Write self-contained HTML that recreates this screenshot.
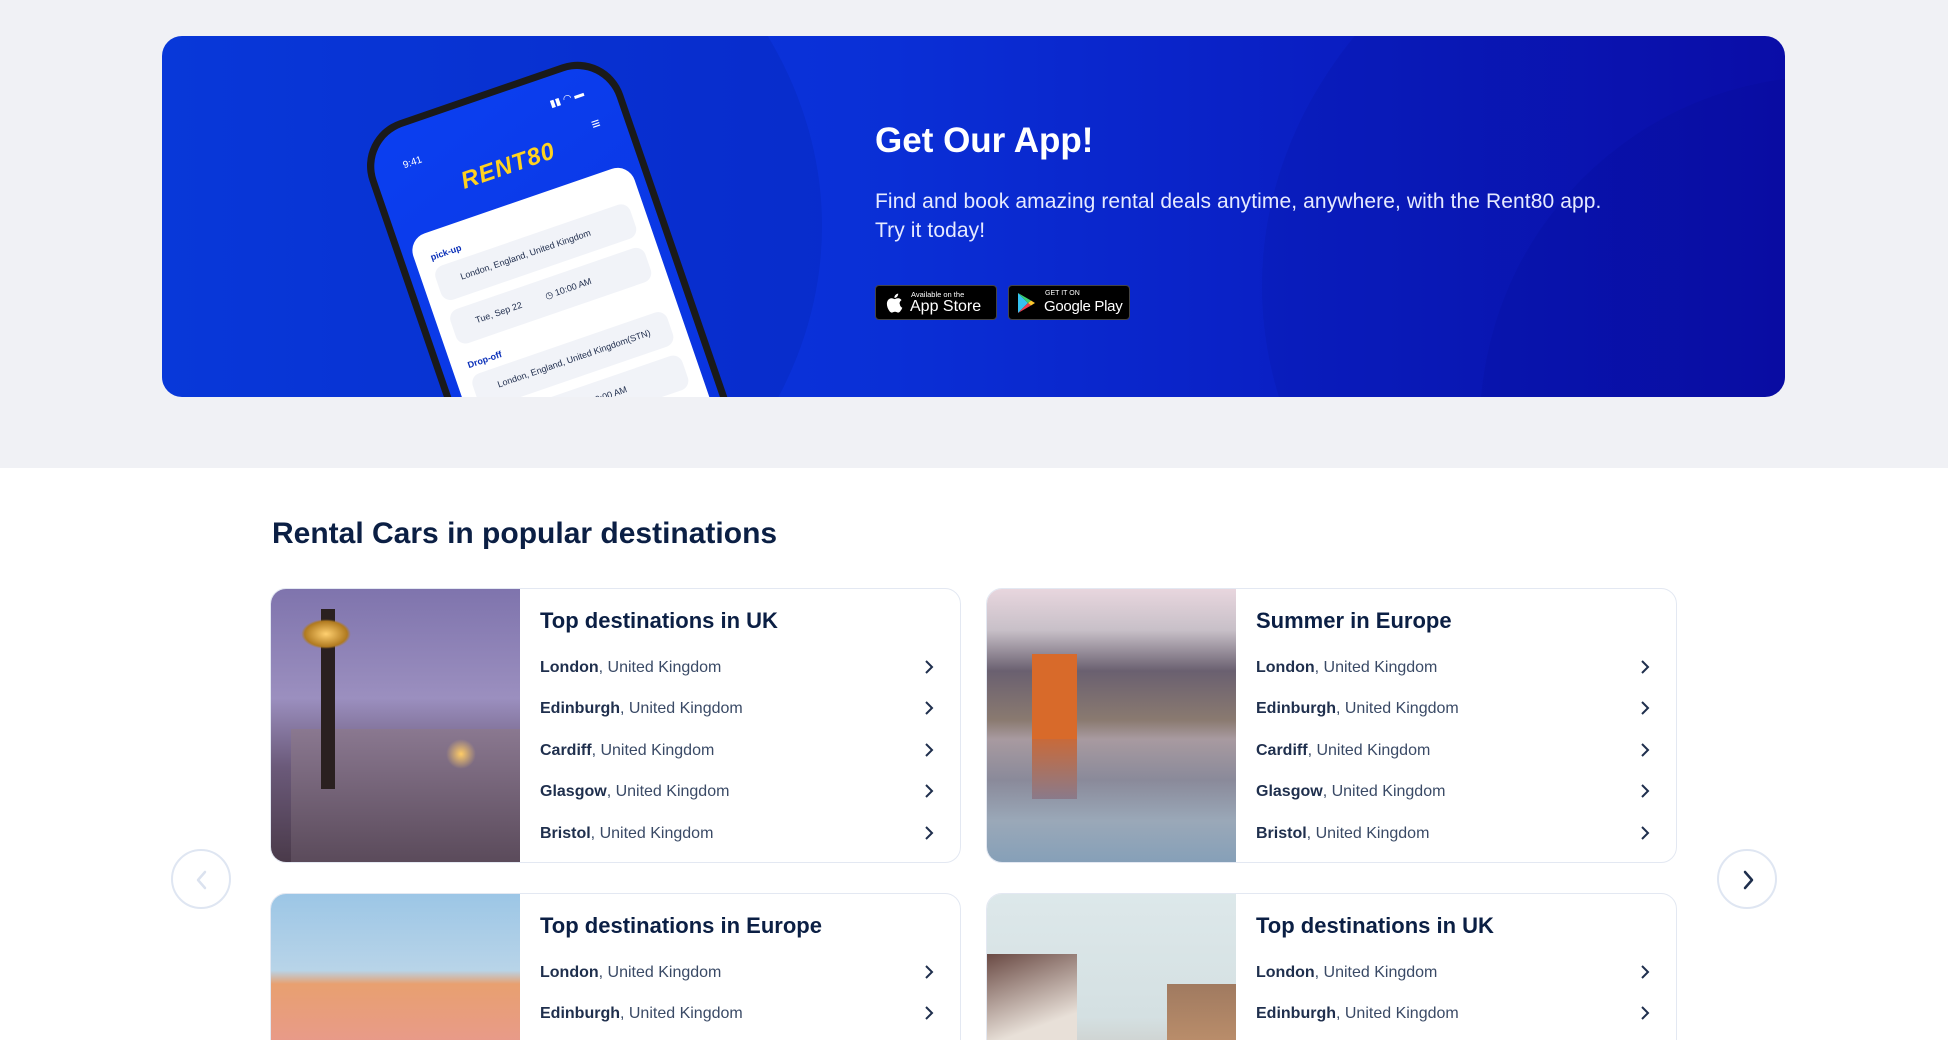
<!DOCTYPE html>
<html><head><meta charset="utf-8">
<style>
*{box-sizing:border-box;margin:0;padding:0}
html,body{width:1948px;height:1040px;overflow:hidden}
body{background:#fff;font-family:"Liberation Sans",sans-serif}
#root{position:relative;width:1948px;height:1040px;overflow:hidden}
.top{position:absolute;left:0;top:0;width:1948px;height:468px;background:#f0f1f5}
.banner{position:absolute;left:162px;top:36px;width:1623px;height:361px;border-radius:20px;overflow:hidden;background:linear-gradient(90deg,#0a3ee6 0%,#0a2fd6 45%,#0a1cc0 75%,#0b0fae 100%)}
.arc1{position:absolute;left:-500px;top:-260px;width:1160px;height:900px;border-radius:50%;background:rgba(0,20,120,0.12)}
.arc2{position:absolute;left:1100px;top:-200px;width:1100px;height:900px;border-radius:50%;background:rgba(0,0,80,0.07)}
.arc3{position:absolute;left:1318px;top:40px;width:700px;height:700px;border-radius:50%;background:rgba(0,0,80,0.06)}
.phone{position:absolute;left:192px;top:100px;width:268px;height:560px;transform:rotate(-19deg);transform-origin:0 0;background:#1a1a1a;border-radius:48px;padding:7px}
.screen{width:100%;height:100%;border-radius:42px;background:linear-gradient(160deg,#0b3ff0,#0a2fd8);position:relative;overflow:hidden}
.sheet{position:absolute;left:10px;top:108px;right:10px;bottom:0;background:#fff;border-radius:18px}
.logo{position:absolute;left:80px;top:58px;color:#ffd21f;font-weight:bold;font-size:24px;font-style:italic;letter-spacing:1px}
.st{position:absolute;color:#fff;font-size:10px}
.fld{position:absolute;left:14px;right:14px;height:36px;background:#f1f3f8;border-radius:10px;font-size:9px;color:#1c2a4a;padding:12px 8px 0 24px;white-space:nowrap}
.lbl{position:absolute;left:16px;font-size:9px;font-weight:bold;color:#0a2fb8}
.ct{position:absolute;left:875px;color:#fff}
h1.ct{top:121px;font-size:35px;font-weight:bold}
p.ct{top:187px;font-size:21px;line-height:29px;color:#e6eaff;width:800px;letter-spacing:0.1px}
.badge{position:absolute;top:285px;height:35px;background:#000;border-radius:4px;border:1px solid #444;color:#fff;white-space:nowrap}
h2{position:absolute;left:272px;top:517px;font-size:30px;color:#0b1f44;font-weight:bold}
.card{position:absolute;width:691px;height:275px;border:1.5px solid #e3e8f2;border-radius:16px;overflow:hidden;background:#fff}
.img{position:absolute;left:0;top:0;width:249px;height:100%}
.card h3{position:absolute;left:269px;top:19px;font-size:22px;color:#0b1f44;font-weight:bold}
.row{position:absolute;left:269px;right:26px;font-size:16px;color:#3a4a66}
.row b{color:#1f2f4d}
.row svg{position:absolute;right:0;top:0px}
.nav{position:absolute;top:849px;width:60px;height:60px;border-radius:50%;border:2px solid #dfe6f2;background:#fff}
.nav svg{position:absolute;left:19px;top:18px}
</style></head><body><div id="root">
<div class="top"></div>
<div class="banner">
 <div class="arc1"></div><div class="arc2"></div><div class="arc3"></div>
 <div class="phone"><div class="screen">
  <div class="st" style="left:30px;top:32px">9:41</div>
  <div class="st" style="right:30px;top:22px">▮▮ ◠ ▬</div>
  <div class="st" style="right:24px;top:52px;font-size:15px">≡</div>
  <div class="logo">RENT80</div>
  <div class="sheet">
   <div class="lbl" style="top:20px">pick-up</div>
   <div class="fld" style="top:36px">London, England, United Kingdom</div>
   <div class="fld" style="top:82px">Tue, Sep 22 &nbsp;&nbsp;&nbsp;&nbsp;&nbsp;&nbsp;&nbsp;&nbsp; ◷ 10:00 AM</div>
   <div class="lbl" style="top:134px">Drop-off</div>
   <div class="fld" style="top:150px">London, England, United Kingdom(STN)</div>
   <div class="fld" style="top:196px">Sat, Sep 22 &nbsp;&nbsp;&nbsp;&nbsp;&nbsp;&nbsp;&nbsp;&nbsp; ◷ 10:00 AM</div>
   <div style="position:absolute;left:14px;right:14px;top:250px;height:44px;background:#0a2fd0;border-radius:10px"></div>
  </div>
 </div></div>
</div>
<h1 class="ct">Get Our App!</h1>
<p class="ct">Find and book amazing rental deals anytime, anywhere, with the Rent80 app.<br>Try it today!</p>
<div class="badge" style="left:875px;width:122px">
 <svg style="position:absolute;left:9px;top:6px" width="18" height="22" viewBox="0 0 18 22"><path fill="#fff" d="M14.5 11.7c0-2.4 2-3.5 2-3.6-1.1-1.6-2.8-1.8-3.4-1.8-1.4-.2-2.8.8-3.5.8-.7 0-1.8-.8-3-.8C5 6.3 3.5 7.2 2.7 8.6c-1.7 2.9-.4 7.2 1.2 9.6.8 1.2 1.7 2.5 3 2.4 1.2 0 1.6-.8 3.1-.8s1.8.8 3.1.8c1.3 0 2.1-1.2 2.9-2.3.9-1.3 1.3-2.6 1.3-2.7-.1 0-2.5-.9-2.5-3.9zM12.2 4.6c.6-.8 1.1-1.9 1-3-1 0-2.1.6-2.8 1.4-.6.7-1.1 1.8-1 2.9 1.1.1 2.1-.5 2.8-1.3z"/></svg>
 <div style="position:absolute;left:35px;top:4px;font-size:7.5px">Available on the</div>
 <div style="position:absolute;left:34px;top:12px;font-size:16px">App Store</div>
</div>
<div class="badge" style="left:1008px;width:122px">
 <svg style="position:absolute;left:8px;top:6px" width="20" height="22" viewBox="0 0 20 22"><path fill="#35c2f0" d="M1 1l10 10L1 21z"/><path fill="#3ad06e" d="M1 1l13 7.5L11 11z"/><path fill="#ef3b4e" d="M1 21l13-7.5L11 11z"/><path fill="#fcc72e" d="M14 8.5l4 2.5-4 2.5-3-2.5z"/></svg>
 <div style="position:absolute;left:36px;top:4px;font-size:7px">GET IT ON</div>
 <div style="position:absolute;left:35px;top:12px;font-size:15px;letter-spacing:-0.3px">Google Play</div>
</div>

<h2>Rental Cars in popular destinations</h2>

<div class="nav" style="left:171px"><svg width="20" height="22" viewBox="0 0 20 22"><path d="M13 3L6 11l7 8" fill="none" stroke="#dbe2ef" stroke-width="2.5" stroke-linecap="round" stroke-linejoin="round"/></svg></div>
<div class="nav" style="left:1717px"><svg width="20" height="22" viewBox="0 0 20 22"><path d="M7 3l7 8-7 8" fill="none" stroke="#1f2f4d" stroke-width="2.5" stroke-linecap="round" stroke-linejoin="round"/></svg></div>

<div class="card" style="left:270px;top:588px">
 <div class="img" style="background:linear-gradient(180deg,#7f74ad 0%,#9b8fbf 40%,#6b5a7a 65%,#4a3a4a 100%)">
  <div style="position:absolute;left:20px;top:140px;width:229px;height:135px;background:linear-gradient(180deg,#8a7890,#5a4a5a)"></div>
  <div style="position:absolute;left:50px;top:20px;width:14px;height:180px;background:#2a2020"></div>
  <div style="position:absolute;left:30px;top:30px;width:50px;height:30px;border-radius:50%;background:radial-gradient(#ffd070,#b07a20 60%,transparent 70%)"></div>
  <div style="position:absolute;left:175px;top:150px;width:30px;height:30px;border-radius:50%;background:radial-gradient(#ffcc66,transparent 70%)"></div>
 </div>
 <h3>Top destinations in UK</h3>
 <div class="row" style="top:70px"><b>London</b>, United Kingdom<svg width="10" height="16" viewBox="0 0 10 16"><path d="M2 2l6 6-6 6" fill="none" stroke="#1f2f4d" stroke-width="2"/></svg></div>
 <div class="row" style="top:111px"><b>Edinburgh</b>, United Kingdom<svg width="10" height="16" viewBox="0 0 10 16"><path d="M2 2l6 6-6 6" fill="none" stroke="#1f2f4d" stroke-width="2"/></svg></div>
 <div class="row" style="top:153px"><b>Cardiff</b>, United Kingdom<svg width="10" height="16" viewBox="0 0 10 16"><path d="M2 2l6 6-6 6" fill="none" stroke="#1f2f4d" stroke-width="2"/></svg></div>
 <div class="row" style="top:194px"><b>Glasgow</b>, United Kingdom<svg width="10" height="16" viewBox="0 0 10 16"><path d="M2 2l6 6-6 6" fill="none" stroke="#1f2f4d" stroke-width="2"/></svg></div>
 <div class="row" style="top:236px"><b>Bristol</b>, United Kingdom<svg width="10" height="16" viewBox="0 0 10 16"><path d="M2 2l6 6-6 6" fill="none" stroke="#1f2f4d" stroke-width="2"/></svg></div>
</div>

<div class="card" style="left:986px;top:588px">
 <div class="img" style="background:linear-gradient(180deg,#e8d6de 0%,#c8c0c8 15%,#6a6070 30%,#8a7a70 48%,#a89aa0 55%,#8a8a9a 70%,#9aa8b8 85%,#86a0b8 100%)">
  <div style="position:absolute;left:45px;top:65px;width:45px;height:85px;background:#d86a2a"></div>
  <div style="position:absolute;left:45px;top:150px;width:45px;height:60px;background:linear-gradient(#c86a3a,#8a7a8a)"></div>
 </div>
 <h3>Summer in Europe</h3>
 <div class="row" style="top:70px"><b>London</b>, United Kingdom<svg width="10" height="16" viewBox="0 0 10 16"><path d="M2 2l6 6-6 6" fill="none" stroke="#1f2f4d" stroke-width="2"/></svg></div>
 <div class="row" style="top:111px"><b>Edinburgh</b>, United Kingdom<svg width="10" height="16" viewBox="0 0 10 16"><path d="M2 2l6 6-6 6" fill="none" stroke="#1f2f4d" stroke-width="2"/></svg></div>
 <div class="row" style="top:153px"><b>Cardiff</b>, United Kingdom<svg width="10" height="16" viewBox="0 0 10 16"><path d="M2 2l6 6-6 6" fill="none" stroke="#1f2f4d" stroke-width="2"/></svg></div>
 <div class="row" style="top:194px"><b>Glasgow</b>, United Kingdom<svg width="10" height="16" viewBox="0 0 10 16"><path d="M2 2l6 6-6 6" fill="none" stroke="#1f2f4d" stroke-width="2"/></svg></div>
 <div class="row" style="top:236px"><b>Bristol</b>, United Kingdom<svg width="10" height="16" viewBox="0 0 10 16"><path d="M2 2l6 6-6 6" fill="none" stroke="#1f2f4d" stroke-width="2"/></svg></div>
</div>

<div class="card" style="left:270px;top:893px">
 <div class="img" style="background:linear-gradient(180deg,#9cc6e6 0%,#b8d4e8 28%,#e8a070 33%,#e89a8a 55%,#e8b880 75%,#d0807a 100%)"></div>
 <h3>Top destinations in Europe</h3>
 <div class="row" style="top:70px"><b>London</b>, United Kingdom<svg width="10" height="16" viewBox="0 0 10 16"><path d="M2 2l6 6-6 6" fill="none" stroke="#1f2f4d" stroke-width="2"/></svg></div>
 <div class="row" style="top:111px"><b>Edinburgh</b>, United Kingdom<svg width="10" height="16" viewBox="0 0 10 16"><path d="M2 2l6 6-6 6" fill="none" stroke="#1f2f4d" stroke-width="2"/></svg></div>
</div>

<div class="card" style="left:986px;top:893px">
 <div class="img" style="background:linear-gradient(180deg,#dde8ea 0%,#d4e0e2 45%,#c8c0b8 70%,#9a7060 100%)">
  <div style="position:absolute;left:0;top:60px;width:90px;height:120px;background:linear-gradient(160deg,#6a4a44,#e8e0d8 60%)"></div>
  <div style="position:absolute;left:180px;top:90px;width:69px;height:90px;background:linear-gradient(#a07a60,#c89870)"></div>
 </div>
 <h3>Top destinations in UK</h3>
 <div class="row" style="top:70px"><b>London</b>, United Kingdom<svg width="10" height="16" viewBox="0 0 10 16"><path d="M2 2l6 6-6 6" fill="none" stroke="#1f2f4d" stroke-width="2"/></svg></div>
 <div class="row" style="top:111px"><b>Edinburgh</b>, United Kingdom<svg width="10" height="16" viewBox="0 0 10 16"><path d="M2 2l6 6-6 6" fill="none" stroke="#1f2f4d" stroke-width="2"/></svg></div>
</div>
</div></body></html>
